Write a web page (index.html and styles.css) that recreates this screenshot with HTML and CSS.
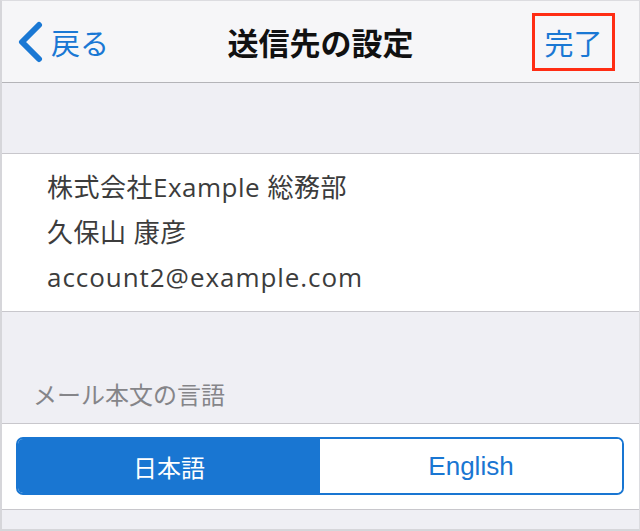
FILE: index.html
```html
<!DOCTYPE html>
<html lang="ja">
<head>
    <meta charset="UTF-8">
    <meta name="viewport" content="width=device-width, initial-scale=1.0">
    <title>送信先の設定</title>
    <link rel="stylesheet" href="styles.css">
</head>
<body>

    <div class="screen">
        <header class="navbar">
            <a class="back" href="#">
                <svg class="chevron" width="26" height="42" viewBox="0 0 26 42">
                    <polyline points="22,4 5,21 22,38" fill="none" stroke="#1a78d4" stroke-width="6" stroke-linecap="round" stroke-linejoin="round"/>
                </svg>
                <span>戻る</span>
            </a>
            <h1 class="title">送信先の設定</h1>
            <div class="done-wrap">
                <a class="done" href="#">完了</a>
            </div>
        </header>

        <div class="spacer"></div>

        <section class="recipient">
            <p>株式会社Example 総務部</p>
            <p>久保山 康彦</p>
            <p class="mail">account2@example.com</p>
        </section>

        <div class="section-head">メール本文の言語</div>

        <section class="lang-row">
            <div class="segmented">
                <button class="seg active">日本語</button>
                <button class="seg seg-en">English</button>
            </div>
        </section>

        <div class="footer-space"></div>
    </div>

</body>
</html>
```

FILE: styles.css
```css
html, body {
    margin: 0;
    padding: 0;
}
body {
    font-family: "Liberation Sans", "Noto Sans CJK JP", sans-serif;
    background-color: #efeff4;
    color: #3c3c3c;
}
.screen {
    width: 640px;
    height: 531px;
    box-sizing: border-box;
    border-top: 1px solid #dcdce0;
    border-left: 2px solid #d6d6da;
    border-right: 1px solid #dcdce0;
    border-bottom: 2px solid #d6d6da;
    display: flex;
    flex-direction: column;
    overflow: hidden;
    background-color: #efeff4;
}

/* Navigationsleiste */
.navbar {
    height: 81px;
    flex: none;
    background-color: #f6f6f8;
    border-bottom: 1px solid #b4b4b8;
    display: grid;
    grid-template-columns: 1fr auto 1fr;
    align-items: center;
}
.back {
    display: flex;
    align-items: center;
    gap: 8px;
    padding-left: 15px;
    color: #1a78d4;
    text-decoration: none;
    font-family: "Noto Sans CJK JP", sans-serif;
    font-size: 29px;
    margin-top: 1px;
}
.chevron {
    display: block;
}
.title {
    margin: 0;
    font-family: "Noto Sans CJK JP", sans-serif;
    font-size: 31px;
    font-weight: bold;
    color: #111;
}
.done-wrap {
    display: flex;
    justify-content: flex-end;
    padding-right: 24px;
}
.done {
    display: block;
    width: 77px;
    height: 52px;
    border: 3px solid #ff2d14;
    color: #1a78d4;
    text-decoration: none;
    font-family: "Noto Sans CJK JP", sans-serif;
    font-size: 29px;
    line-height: 52px;
    text-align: center;
    margin-top: 1px;
}

.spacer {
    height: 70px;
    flex: none;
    border-bottom: 1px solid #c8c7cc;
}

/* Empfänger */
.recipient {
    background-color: #fff;
    height: 158px;
    flex: none;
    box-sizing: border-box;
    border-bottom: 1px solid #c8c7cc;
    padding: 11px 0 0 45px;
}
.recipient p {
    margin: 0;
    font-family: "Open Sans", "Noto Sans CJK JP", sans-serif;
    font-size: 26px;
    letter-spacing: 0.5px;
    line-height: 45px;
}
.recipient .mail {
    letter-spacing: 0.95px;
}

.section-head {
    height: 112px;
    flex: none;
    box-sizing: border-box;
    border-bottom: 1px solid #c8c7cc;
    padding: 66px 0 0 31px;
    font-family: "Noto Sans CJK JP", sans-serif;
    font-size: 24px;
    line-height: 32px;
    color: #858589;
}

.lang-row {
    background-color: #fff;
    height: 86px;
    flex: none;
    box-sizing: border-box;
    border-bottom: 1px solid #c8c7cc;
    padding: 13px 15px 0 14px;
}
.segmented {
    display: flex;
    height: 58px;
    box-sizing: border-box;
    border: 2px solid #1976d2;
    border-radius: 7px;
    overflow: hidden;
}
.seg {
    flex: 1;
    border: none;
    margin: 0;
    padding: 0;
    background-color: #fff;
    color: #1976d2;
    font-family: "Noto Sans CJK JP", sans-serif;
    font-size: 24px;
    cursor: pointer;
}
.seg.active {
    background-color: #1976d2;
    color: #fff;
}
.seg-en {
    font-family: "Liberation Sans", sans-serif;
    font-size: 26px;
}

.footer-space {
    flex: 1;
}
```
